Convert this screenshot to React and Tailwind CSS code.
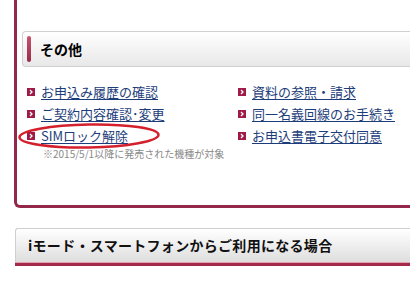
import React from 'react';

const links = [
    ['お申込み履歴の確認', '資料の参照・請求'],
    ['ご契約内容確認･変更', '同一名義回線のお手続き'],
    ['SIMロック解除', 'お申込書電子交付同意'],
];

const Bullet = () => (
    <span className="inline-flex items-center justify-center w-[8px] h-[8px] bg-[#a01a48] shrink-0">
        <svg width="6" height="6" viewBox="0 0 6 6">
            <path d="M2 1 L4 3 L2 5" stroke="#fff" strokeWidth="1.3" fill="none" />
        </svg>
    </span>
);

const LinkItem = ({ label }) => (
    <div className="flex items-center gap-[6px] h-[22px]">
        <Bullet />
        <a href="#" className="text-[13px] leading-[22px] text-[#1d3d7a] underline underline-offset-2 decoration-[#1d3d7a] whitespace-nowrap">
            {label}
        </a>
    </div>
);

const App = () => {
    return (
        <div className="relative w-[410px] h-[281px] overflow-hidden bg-white font-['Noto_Sans_CJK_JP','Noto_Sans',sans-serif]">
            {/* その他 のカード */}
            <div className="ml-[14px] w-[420px] border-l-[3px] border-b-[3px] border-[#93284a] rounded-bl-[6px] pt-[31px] pb-[45px]">
                <div className="ml-[5px] h-[36px] flex items-center gap-[9px] pl-[4px] border border-r-0 border-[#d0d0d0] rounded-l-[4px] bg-gradient-to-b from-white to-[#e8e8e8]">
                    <span className="w-[4px] h-[26px] rounded-full bg-gradient-to-b from-[#c9536f] to-[#9a2a4a]" />
                    <span className="text-[14px] font-bold text-black">その他</span>
                </div>

                <div className="mt-[14px] pl-[10px] grid grid-cols-[211px_1fr]">
                    {links.map(([a, b]) => (
                        <React.Fragment key={a}>
                            <LinkItem label={a} />
                            <LinkItem label={b} />
                        </React.Fragment>
                    ))}
                </div>
                <p className="pl-[26px] text-[10px] leading-[13px] text-[#888]">
                    ※2015/5/1以降に発売された機種が対象
                </p>
            </div>

            {/* iモード セクション見出し */}
            <div className="ml-[15px] mt-[20px] w-[420px]">
                <div className="h-[34px] flex items-center pl-[12px] border border-r-0 border-b-0 border-[#cfcfcf] rounded-tl-[3px] bg-gradient-to-b from-white to-[#dedede]">
                    <span className="text-[14px] font-bold text-[#111] tracking-[0.3px]">iモード・スマートフォンからご利用になる場合</span>
                </div>
                <div className="h-[1px] bg-[#e7a2b2]" />
                <div className="h-[3px] bg-[#a32a4a]" />
            </div>

            {/* 赤丸 */}
            <svg className="absolute left-[17px] top-[122px]" width="144" height="28" viewBox="0 0 144 28">
                <ellipse cx="72" cy="14" rx="69.5" ry="11.5" fill="none" stroke="#d3202c" strokeWidth="2.5" transform="rotate(-1 72 14)" />
            </svg>
        </div>
    );
};

export default App;
